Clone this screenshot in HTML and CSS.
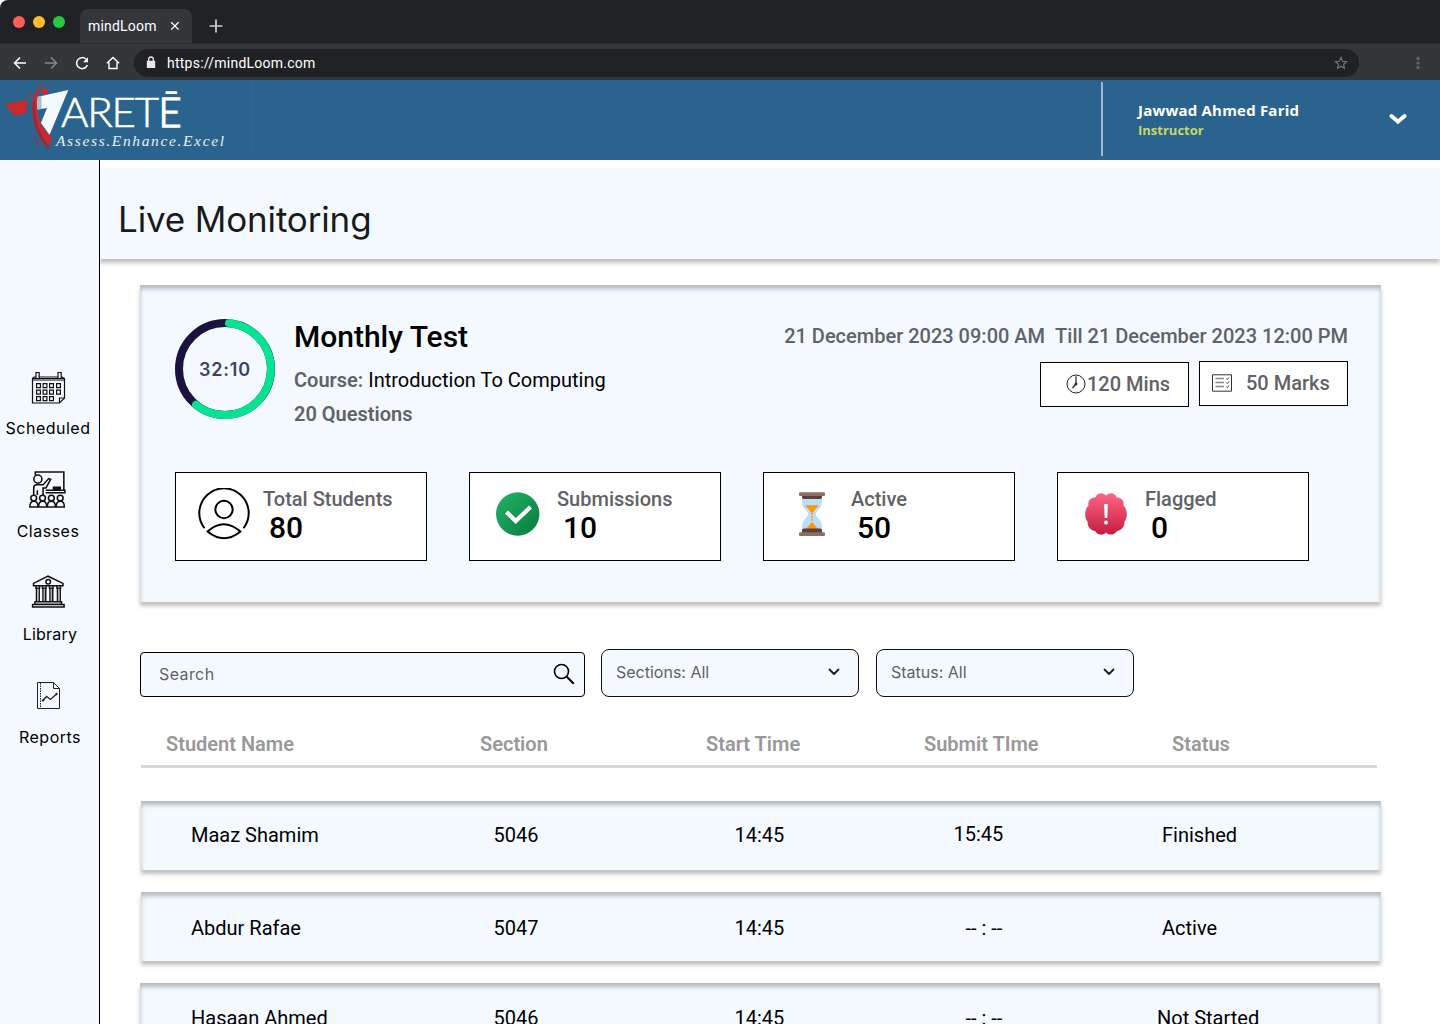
FILE: index.html
```html
<!DOCTYPE html>
<html lang="en">
<head>
<meta charset="utf-8">
<title>mindLoom</title>
<link rel="stylesheet" href="styles.css">
</head>
<body>
<div class="browser">
  <div class="tabstrip">
    <div class="lights"><i class="red"></i><i class="amber"></i><i class="green"></i></div>
    <div class="tab"><span>mindLoom</span>
      <svg width="10" height="10" viewBox="0 0 10 10"><path d="M1.2 1.2l7.4 7.4M8.6 1.2L1.2 8.6" stroke="#fff" stroke-width="1.3"/></svg>
    </div>
    <svg class="plus" width="14" height="14" viewBox="0 0 14 14"><path d="M7 .5v13M.5 7h13" stroke="#d0d1d3" stroke-width="1.7"/></svg>
  </div>
  <div class="toolbar">
    <svg class="nav" viewBox="0 0 16 16" fill="none" stroke="#fff" stroke-width="1.5"><path d="M14 8H3M8 2.5L2.5 8 8 13.500"/></svg>
    <svg class="nav" viewBox="0 0 16 16" fill="none" stroke="#85868a" stroke-width="1.5"><path d="M2 8h11M8 2.500L13.500 8 8 13.500"/></svg>
    <svg class="nav" viewBox="0 0 16 16"><path d="M13.300 10A5.500 5.500 0 1 1 12 4.200" fill="none" stroke="#fff" stroke-width="1.500"/><path d="M14 2.200V7.200H9z" fill="#fff"/></svg>
    <svg class="nav" viewBox="0 0 16 16" fill="none" stroke="#fff" stroke-width="1.400"><path d="M1.800 8.300L8 2.500l6.200 5.800M4 7.200v6.300h8V7.200"/></svg>
    <div class="address">
      <svg width="10" height="13" viewBox="0 0 10 13"><path d="M.8 4.800h8.400v7.200H.8z" fill="#e8e8e9"/><path d="M2.700 5V3.300a2.300 2.300 0 0 1 4.600 0V5" fill="none" stroke="#e8e8e9" stroke-width="1.300"/></svg>
      <span class="url">https://mindLoom.com</span>
      <svg class="star" width="14" height="14" viewBox="0 0 14 14"><path d="M7 1.500l1.600 3.700 4 .4-3 2.700.9 4L7 10.200l-3.500 2.100.9-4-3-2.700 4-.4z" fill="none" stroke="#77787b" stroke-width="1.100"/></svg>
    </div>
    <svg class="kebab" width="4" height="14" viewBox="0 0 4 14" fill="#66676b"><circle cx="2" cy="2.500" r="1.600"/><circle cx="2" cy="7" r="1.600"/><circle cx="2" cy="11.500" r="1.600"/></svg>
  </div>
</div>

<header class="header">
  <svg class="logo" width="252" height="80" viewBox="0 0 252 80">
    <path d="M5 24l22.300-4.300L26.700 33.300 14 35.700z" fill="#c92a2e"/>
    <path d="M37 17L68.300 10 49.500 55 41 43l6-15-9.500 1.500z" fill="#f4f9fe"/>
    <path d="M37 17l4.500-1v13l-4 .5z" fill="#aebccb"/>
    <path d="M43.300 1C36 9 32 19 32 30c0 16 8 30 16 39l4-12C44 51 38 42 37 28c-.5-12 2-20 6.300-27z" fill="#c92a2e"/>
    <path d="M33 22c-3 18 5 35 15 47l1-3C41 56 34 42 35 20z" fill="#912c3d"/>
    <circle cx="44.300" cy="11.300" r="3.300" fill="#c92a2e"/><circle cx="31.300" cy="15.700" r="1.700" fill="#c92a2e"/><circle cx="48.300" cy="4.700" r="1" fill="#c92a2e"/>
    <path d="M33.500 57l3 5 4 5-3.500-6z" fill="#a62b38" stroke="#a62b38" stroke-width=".5"/>
    <text class="logo-name" x="61" y="47" textLength="98">ARET</text>
    <text class="logo-name logo-last" x="158.500" y="47" textLength="23" lengthAdjust="spacingAndGlyphs">Ē</text>
    <text class="logo-tag" x="56" y="66" textLength="168">Assess.Enhance.Excel</text>
    <path d="M251.500 2v67" stroke="#346995"/>
  </svg>
  <div class="user">
    <div><div class="user-name">Jawwad Ahmed Farid</div><div class="user-role">Instructor</div></div>
    <svg width="18" height="12" viewBox="0 0 18 12"><path d="M2.500 3L9 8.700 15.500 3" fill="none" stroke="#fff" stroke-width="4" stroke-linecap="round"/></svg>
  </div>
</header>

<div class="body">
<nav class="sidebar">
  <a class="item scheduled">
    <svg width="40" height="40" viewBox="0 0 40 40" fill="none" stroke="#111" stroke-width="1.200"><path d="M4.500 12V10.500h32V30l-5 5h-27V12h32"/><path d="M31.500 35v-5h5"/><path d="M4.500 10.500L6 9h28l2.500 1.500"/><path d="M8 4.500h3.200v6H8zM30 4.500h3.200v6H30z" fill="#f3f8fd"/><path d="M8.600 15.600h3.800v4H8.600zM15.100 15.600h3.800v4h-3.800zM21.600 15.600h3.800v4h-3.800zM28.600 15.600h3.800v4h-3.800zM8.600 22.100h3.800v4H8.600zM15.100 22.100h3.800v4h-3.800zM21.600 22.100h3.800v4h-3.800zM28.600 22.100h3.800v4h-3.800zM8.600 28.600h3.800v4H8.600zM15.100 28.600h3.800v4h-3.800zM21.600 28.600h3.800v4h-3.800z"/></svg>
    <span>Scheduled</span></a>
  <a class="item classes">
    <svg width="40" height="40" viewBox="3 .9 38.500 38.500" fill="none" stroke="#111" stroke-width="1.500"><path d="M10 5V1.900h27.500v18M20 19.500h18.500v2.300H20"/><path d="M27.500 16.500h6.500v3h-6.500z" fill="#111"/><circle cx="12.500" cy="8.700" r="3.900"/><path d="M8.500 24V17q0-2.800 3-2.800h6l5.500-6 1.800.8-4.500 8.200h-2.800V24M12 24v-4.500"/><circle cx="8.500" cy="27" r="2.800"/><circle cx="17" cy="27" r="2.800"/><circle cx="25.500" cy="27" r="2.800"/><circle cx="34" cy="27" r="2.800"/><path d="M4.800 35.500q0-5.500 3.900-5.500t3.900 5.500zM13.200 35.500q0-5.500 3.900-5.500t3.900 5.500zM21.600 35.500q0-5.500 3.900-5.500t3.900 5.500zM30.200 35.500q0-5.500 3.900-5.500t3.900 5.500z"/></svg>
    <span>Classes</span></a>
  <a class="item library">
    <svg width="40" height="40" viewBox="0 1.300 40 40" fill="none" stroke="#111" stroke-width="1.500"><path d="M5.500 13v-2.300L20 3.500l15 7.200V13z"/><circle cx="20.200" cy="9" r="2.300"/><path d="M8 13v2.500h3.500V13M14.500 13v2.500H18V13M21.500 13v2.500H25V13M29 13v2.500h3.500V13"/><path d="M8.500 15.500V29M11.200 15.500V29M15 15.500V29M17.700 15.500V29M22 15.500V29M24.700 15.500V29M29.500 15.500V29M32.200 15.500V29"/><path d="M9.900 16v13M16.400 16v13M23.400 16v13M30.800 16v13" stroke="#aaa" stroke-width="1.200"/><path d="M7 29h26.500v2.500H7zM4.600 31.800h31.500v2.600H4.600z"/></svg>
    <span>Library</span></a>
  <a class="item reports">
    <svg width="40" height="40" viewBox="0 1 40 40" fill="none" stroke="#222" stroke-width="1"><path d="M9.500 6.500h16l6 6V32.500h-22zM25.500 6.500v6h6"/><path d="M12.500 7v25" stroke-dasharray="1.500 1"/><path d="M15 24.500l3.500-4 4 3 6-5.500" stroke-width="1.300"/><circle cx="15" cy="24.500" r=".8" fill="#222"/><circle cx="28.500" cy="18" r=".8" fill="#222"/></svg>
    <span>Reports</span></a>
</nav>

<main class="main">
  <div class="title-bar"><h1>Live Monitoring</h1></div>
  <section class="card">
    <div class="summary">
      <div class="timer">
        <svg width="100" height="100" viewBox="0 0 100 100" fill="none" stroke-width="8"><circle cx="50" cy="50" r="46" stroke="#1b123f"/><path d="M54 4.200A46 46 0 1 1 21 85.800" stroke="#08e293" stroke-linecap="round"/></svg>
        <span>32:10</span>
      </div>
      <div class="test">
        <h2>Monthly Test</h2>
        <p><b>Course:</b> Introduction To Computing</p>
        <p><b>20 Questions</b></p>
      </div>
      <div class="schedule">
        <div class="dates"><span>21 December 2023 09:00 AM</span><span>Till 21 December 2023 12:00 PM</span></div>
        <div class="chips">
          <div class="chip mins"><svg width="20" height="20" viewBox="0 0 20 20" fill="none" stroke="#222"><circle cx="10" cy="10" r="9"/><path d="M10 2.500V10l-3.500 4" stroke-width="1.200"/><circle cx="10" cy="10" r="1" fill="#111"/><path d="M10 1v2M10 17v2M1 10h2M17 10h2" stroke="#999" stroke-width=".6"/></svg><span>120 Mins</span></div>
          <div class="chip marks"><svg width="20" height="18" viewBox="0 0 20 18" fill="none" stroke="#333"><path d="M.5.800h19v16.400H.5z"/><path d="M3.500 4.500H12M3.500 8.500H12M3.500 12.500H12" stroke="#888" stroke-width="1.500"/><path d="M14.300 4.500l1 1 1.700-2M14.300 8.500l1 1 1.700-2M14.300 12.500l1 1 1.700-2"/></svg><span>50 Marks</span></div>
        </div>
      </div>
    </div>
    <div class="stats">
      <div class="stat">
        <svg width="52" height="52" viewBox="0 0 52 52" fill="none" stroke="#000" stroke-width="2" stroke-linecap="round"><path d="M6 39.500A24.700 24.700 0 1 1 46 39.500"/><circle cx="26" cy="21.500" r="8.700"/><path d="M9.500 43.500Q25.500 29 42.500 43.500Q26 57 9.500 43.500z" stroke-linejoin="round"/></svg>
        <div><span>Total Students</span><strong>80</strong></div>
      </div>
      <div class="stat">
        <svg width="52" height="52" viewBox="0 0 52 52"><defs><linearGradient id="gr" x1="0" y1="0" x2="1" y2="1"><stop offset=".1" stop-color="#21ad64"/><stop offset=".9" stop-color="#088242"/></linearGradient></defs><circle cx="25.700" cy="26" r="21.700" fill="url(#gr)"/><path d="M16 25.500l7.700 7.500L37 20.500" fill="none" stroke="#fff" stroke-width="4.200" stroke-linecap="square"/></svg>
        <div><span>Submissions</span><strong>10</strong></div>
      </div>
      <div class="stat">
        <svg width="52" height="52" viewBox="0 0 52 52"><path d="M16 10h20v4c0 7-6 8-6 12s6 5 6 13v3H16v-3c0-8 6-9 6-13s-6-5-6-12z" fill="#bbdefb"/><path d="M19.200 17.300h13.600L26 25.500zM26 34l7 8H19z" fill="#ff9800"/><path d="M26 25v9" stroke="#ff9800" stroke-width="1.600" stroke-dasharray="1.700 1.300"/><path d="M16 6h20v3.500a2 2 0 0 1-2 1.500H18a2 2 0 0 1-2-1.500zM16 46v-4a2 2 0 0 1 2-1.500h16a2 2 0 0 1 2 1.500v4z" fill="#5d4037"/><rect x="13" y="4.300" width="26" height="3.700" rx="1.200" fill="#8d6e63"/><rect x="13" y="44.200" width="26" height="3.700" rx="1.200" fill="#8d6e63"/></svg>
        <div><span>Active</span><strong>50</strong></div>
      </div>
      <div class="stat">
        <svg width="52" height="52" viewBox="0 0 52 52"><defs><linearGradient id="rd" x1="0" y1="0" x2="0" y2="1"><stop offset="0" stop-color="#ff6584"/><stop offset="1" stop-color="#c31d41"/></linearGradient></defs><path d="M26 7.500C22 3.500 16.500 5 15.500 9.500 10.500 9.500 7.500 13 8.500 17.500 4.500 21 4 30 7.700 34 7 38 10.500 42.500 15 43 17.500 47.500 23.500 47.500 26 44.500 28.500 47.500 34.500 47.500 37 43 41.500 42.500 45 38 44.300 34 48 30 47.500 21 43.500 17.500 44.500 13 41.500 9.500 36.500 9.500 35.500 5 30 3.500 26 7.500z" fill="url(#rd)"/><path d="M24.100 16h3.800l-.6 14h-2.600z" fill="#fff"/><circle cx="26" cy="34.500" r="2" fill="#fff"/></svg>
        <div><span>Flagged</span><strong>0</strong></div>
      </div>
    </div>
  </section>

  <div class="filters">
    <div class="search"><span>Search</span><svg width="22" height="22" viewBox="0 0 22 22" fill="none" stroke="#000"><circle cx="8.500" cy="8.500" r="7" stroke-width="1.600"/><path d="M13.500 13.500l7.300 7.300" stroke-width="2"/></svg></div>
    <div class="select"><span>Sections: All</span><svg width="12" height="8" viewBox="0 0 12 8"><path d="M1.500 1.500L6 6l4.500-4.500" fill="none" stroke="#1d1d1d" stroke-width="1.800" stroke-linecap="round" stroke-linejoin="round"/></svg></div>
    <div class="select status"><span>Status: All</span><svg width="12" height="8" viewBox="0 0 12 8"><path d="M1.500 1.500L6 6l4.500-4.500" fill="none" stroke="#1d1d1d" stroke-width="1.800" stroke-linecap="round" stroke-linejoin="round"/></svg></div>
  </div>

  <div class="thead"><span>Student Name</span><span>Section</span><span>Start Time</span><span>Submit TIme</span><span>Status</span></div>
  <div class="rows">
    <div class="row first"><span>Maaz Shamim</span><span>5046</span><span>14:45</span><span class="submitted">15:45</span><span>Finished</span></div>
    <div class="row second"><span>Abdur Rafae</span><span>5047</span><span>14:45</span><span class="empty">-- : --</span><span>Active</span></div>
    <div class="row third"><span>Hasaan Ahmed</span><span>5046</span><span>14:45</span><span class="empty">-- : --</span><span class="pending">Not Started</span></div>
  </div>
</main>
</div>
</body>
</html>
```
FILE: styles.css
```css
* { box-sizing: border-box; }
body { margin: 0; width: 1440px; height: 1024px; overflow: hidden; background: #fff; font-family: Roboto, "Liberation Sans", sans-serif; color: #000; display: flex; flex-direction: column; }
svg { display: block; flex: none; }
h1, h2, p { margin: 0; font-weight: 400; }

.browser { height: 80px; flex: none; background: #202124; border-top-left-radius: 8px; overflow: hidden; color: #fff; }
.tabstrip { height: 43px; display: flex; align-items: flex-start; padding-left: 13px; }
.lights { display: flex; gap: 8px; padding-top: 16px; width: 67px; }
.lights i { width: 12px; height: 12px; border-radius: 50%; }
.red { background: #ff5f57; }
.amber { background: #febc2e; }
.green { background: #28c840; }
.tab { width: 112px; height: 34px; margin-top: 9px; background: #35363a; border-radius: 8px 8px 0 0; display: flex; align-items: center; justify-content: space-between; padding: 0 12px 0 8px; font-size: 14px; letter-spacing: .2px; }
.plus { margin: 19px 0 0 17px; }
.toolbar { height: 37px; background: #35363a; border-top: 1px solid #2b2c2f; display: flex; align-items: center; padding: 1px 20px 0 12px; }
.nav { width: 16px; height: 16px; margin-right: 15px; }
.address { width: 1225px; height: 28px; margin-left: -2px; border-radius: 14px; background: #202124; display: flex; align-items: center; padding: 0 11px 0 12px; }
.url { margin-left: 11px; font-size: 14px; letter-spacing: .24px; flex: 1; }
.kebab { margin-left: 57px; }

.header { height: 80px; flex: none; background: #2b638f; display: flex; justify-content: space-between; align-items: flex-start; }
.logo-name { font: 300 42px Lato, sans-serif; fill: #fff; stroke: #fff; stroke-width: .6px; }
.logo-last { stroke-width: 1.5px; }
.logo-tag { font: italic 15.5px "Liberation Serif", serif; fill: #e8eff6; }
.user { width: 339px; height: 74px; margin-top: 2px; border-left: 2px solid #a0b8cf; display: flex; justify-content: space-between; align-items: center; padding: 0 33px 0 35px; color: #fff; font-family: "Open Sans", sans-serif; }
.user-name { font-size: 15px; font-weight: 700; line-height: 20px; letter-spacing: .2px; padding-top: 1px; }
.user-role { font-size: 13px; font-weight: 700; line-height: 20px; color: #c4d867; }

.body { flex: 1; min-height: 0; display: flex; }
.sidebar { position: relative; z-index: 1; width: 100px; flex: none; background: #f3f9fe; border-right: 1px solid #000; padding-top: 208px; font: 16px Inter, sans-serif; letter-spacing: .5px; }
.item { height: 80px; margin-bottom: 23px; display: flex; flex-direction: column; align-items: center; padding-right: 3px; }
.item span { line-height: 40px; white-space: nowrap; }
.library span, .reports span { padding-left: 4px; }
.library span { letter-spacing: .2px; }

.main { flex: 1; min-width: 0; }
.title-bar { height: 91px; margin-top: 8px; padding: 24px 0 0 18px; background: #f3f9fe; box-shadow: 0 4px 4px rgba(0,0,0,.25); }
h1 { font: 400 35px/54px Inter, sans-serif; letter-spacing: -.15px; color: #1a1a1a; }

.card { width: 1241px; height: 317px; margin: 26px 0 0 40px; padding: 34px 33px 0 35px; background: #f3f9fe; box-shadow: 0 4px 4px rgba(0,0,0,.25), inset 0 4px 4px rgba(0,0,0,.25); }
.summary { display: flex; height: 153px; }
.timer { display: grid; place-items: center; width: 100px; height: 100px; font: 600 18px Inter, sans-serif; letter-spacing: .8px; color: #3d4266; }
.timer > * { grid-area: 1 / 1; }
.test { margin-left: 19px; font-size: 20px; white-space: nowrap; }
h2 { font-size: 30px; font-weight: 500; line-height: 36px; margin-bottom: 8px; }
.test p { line-height: 34px; }
.test b { font-weight: 600; color: #5f6368; }
.schedule { margin-left: auto; font-size: 20px; font-weight: 500; color: #5f6368; }
.dates { display: flex; justify-content: flex-end; gap: 10px; line-height: 34px; white-space: nowrap; }
.chips { display: flex; justify-content: flex-end; gap: 10px; padding-top: 8px; }
.chip { width: 149px; height: 45px; border: 1px solid #000; background: #fff; display: flex; align-items: center; }
.chip span { padding-bottom: 1px; }
.mins { margin-top: 1px; padding: 0 0 1px 25px; gap: 1px; }
.marks { padding: 0 0 1px 12px; gap: 14px; }
.stats { display: flex; gap: 42px; }
.stat { width: 252px; height: 89px; border: 1px solid #000; background: #fff; display: flex; align-items: flex-start; padding: 15px 0 0 22px; gap: 13px; }
.stat span { display: block; margin-top: -1px; font-size: 20px; font-weight: 500; line-height: 24px; color: #5f6368; }
.stat strong { display: block; font-size: 30px; font-weight: 500; line-height: 34px; padding-left: 6px; }

.filters { display: flex; align-items: flex-end; margin: 46px 0 0 40px; font: 16px Inter, sans-serif; color: #5f6368; height: 49px; }
.search { width: 445px; height: 45px; border: 1px solid #000; border-radius: 4px; background: #f3f9fe; display: flex; align-items: center; justify-content: space-between; padding: 0 9px 2px 18px; letter-spacing: .4px; }
.select { width: 258px; height: 48px; margin-left: 16px; border: 1px solid #111; border-radius: 8px; background: #f3f9fe; display: flex; align-items: center; justify-content: space-between; padding: 0 18px 2px 14px; }
.status { margin-left: 17px; }

.thead { display: grid; grid-template-columns: 314px 226px 218px 248px 1fr; width: 1236px; height: 48px; margin: 23px 0 0 41px; padding-left: 25px; border-bottom: 3px solid #d9d9d9; font-size: 20px; font-weight: 600; color: #999; line-height: 48px; }
.rows { margin: 33px 0 0 41px; }
.row { display: grid; grid-template-columns: 302.5px 241px 219px 208.5px 1fr; width: 1240px; height: 69px; margin-bottom: 22px; padding-left: 50px; background: #f3f9fe; box-shadow: 0 4px 4px rgba(0,0,0,.25), inset 0 4px 4px rgba(0,0,0,.25); font-size: 20px; line-height: 69px; }
.second { line-height: 72px; }
.third { margin-left: -1px; padding-left: 51px; line-height: 70px; }
.submitted { line-height: 67px; }
.empty { padding-left: 12px; }
.pending { margin-left: -5px; }
```
